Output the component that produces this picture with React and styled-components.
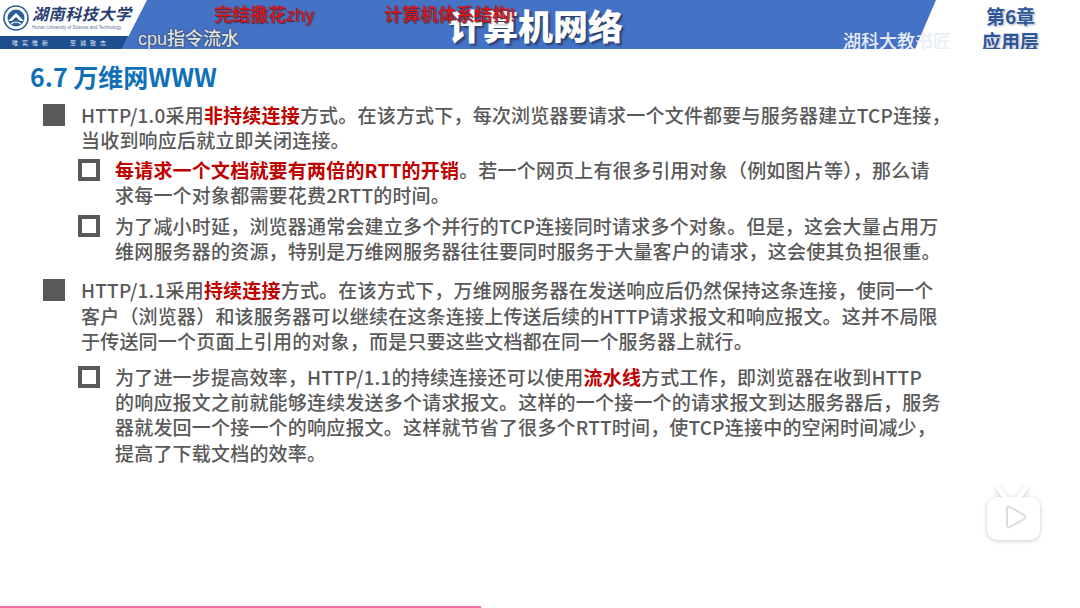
import React from 'react';
import styled, { createGlobalStyle } from 'styled-components';

const GlobalStyle = createGlobalStyle`
  html, body {
    margin: 0;
    padding: 0;
    background: #fff;
  }
  body {
    font-family: "Noto Sans CJK SC", "Noto Sans", sans-serif;
  }
`;

const Page = styled.div`
  position: relative;
  width: 1080px;
  height: 608px;
  overflow: hidden;
  background: #fff;
`;

const Header = styled.header`
  position: relative;
  display: flex;
  justify-content: space-between;
  height: 49px;
  background: #4472c4;
`;

const LogoPanel = styled.div`
  display: flex;
  flex-direction: column;
  width: 147px;
  background: #fff;
  clip-path: polygon(0 0, 100% 0, 122px 100%, 0 100%);
`;

const LogoTop = styled.div`
  display: flex;
  align-items: center;
  gap: 3px;
  height: 36px;
  padding-left: 3px;
`;

const SchoolName = styled.div`
  display: flex;
  flex-direction: column;
`;

const SchoolCn = styled.span`
  font-family: "Liberation Serif", "Noto Sans CJK SC", serif;
  font-size: 16px;
  font-style: italic;
  font-weight: 700;
  line-height: 20px;
  letter-spacing: 0.6px;
  color: #27406f;
  white-space: nowrap;
`;

const SchoolEn = styled.span`
  font-family: "Liberation Sans", sans-serif;
  font-size: 4.5px;
  line-height: 6px;
  color: #5a6f95;
  white-space: nowrap;
`;

const Motto = styled.div`
  display: flex;
  gap: 18px;
  height: 13px;
  padding-left: 12px;
  background: #1f4e8f;
  font-size: 6px;
  line-height: 13px;
  letter-spacing: 4px;
  color: #dfe7f3;
  white-space: nowrap;
`;

const ChapterPanel = styled.div`
  display: flex;
  flex-direction: column;
  align-items: center;
  width: 165px;
  padding-left: 26px;
  padding-top: 3px;
  box-sizing: border-box;
  background: #fff;
  clip-path: polygon(21px 0, 100% 0, 100% 100%, 0 100%);
`;

const ChapterLine = styled.span`
  font-size: 19px;
  font-weight: 700;
  line-height: 25px;
  color: #2f5597;
  text-shadow: 0 0 2px #fff, 1px 1px 2px #8e9bb5;
`;

const Title = styled.h1`
  position: absolute;
  left: 448px;
  top: 2px;
  margin: 0;
  font-size: 35px;
  font-weight: 900;
  line-height: 46px;
  color: #fff;
  text-shadow: 2px 2px 2px #2a3f6e;
  white-space: nowrap;
`;

const Danmaku = styled.span`
  position: absolute;
  left: ${p => p.$x}px;
  top: ${p => p.$y}px;
  font-family: "Liberation Sans", "Noto Sans CJK SC", sans-serif;
  font-size: ${p => p.$size}px;
  line-height: 22px;
  font-weight: 500;
  color: ${p => p.$color};
  text-shadow: ${p => p.$shadow};
  white-space: nowrap;
`;

const Main = styled.main`
  padding: 11px 0 0 30px;
`;

const SectionTitle = styled.h2`
  margin: 0 0 9px;
  font-size: 25px;
  font-weight: 700;
  line-height: 33px;
  color: #0f70b7;
`;

const List = styled.div`
  display: flex;
  flex-direction: column;
  padding-left: 13px;
`;

const Item = styled.div`
  display: flex;
  gap: ${p => (p.$sub ? 15 : 16)}px;
  margin-left: ${p => (p.$sub ? 35 : 0)}px;
  margin-top: ${p => p.$top || 0}px;
`;

const Bullet = styled.span`
  flex: none;
  box-sizing: border-box;
  width: 22px;
  height: 22px;
  margin-top: 2px;
  border: 4px solid #595959;
  background: ${p => (p.$filled ? '#595959' : '#fff')};
`;

const Text = styled.p`
  margin: 0;
  font-size: 19px;
  font-weight: 500;
  line-height: 25.4px;
  letter-spacing: 0.2px;
  color: #595959;
  white-space: nowrap;
`;

const Mark = styled.span`
  font-weight: 700;
  color: #c00000;
`;

const TvBadge = styled.svg`
  position: absolute;
  left: 984px;
  top: 486px;
  filter: drop-shadow(0 1px 2px rgba(0, 0, 0, 0.22));
`;

const Progress = styled.div`
  position: absolute;
  left: 0;
  bottom: 0;
  width: 481px;
  height: 2px;
  background: #fb7299;
`;

export default function App() {
  return (
    <Page>
      <GlobalStyle />
      <Header>
        <LogoPanel>
          <LogoTop>
            <svg width="26" height="26" viewBox="0 0 26 26">
              <circle cx="13" cy="13" r="12" fill="#fff" stroke="#2b5c9c" strokeWidth="1.6" />
              <circle cx="13" cy="13" r="8.5" fill="#2b5c9c" />
              <path d="M5 16 L13 8 L21 16 L17 16 L13 12 L9 16 Z" fill="#fff" />
              <path d="M8 19 Q13 15 18 19" fill="none" stroke="#fff" strokeWidth="1.2" />
            </svg>
            <SchoolName>
              <SchoolCn>湖南科技大学</SchoolCn>
              <SchoolEn>Hunan University of Science and Technology</SchoolEn>
            </SchoolName>
          </LogoTop>
          <Motto>
            <span>唯实惟新</span>
            <span>至诚致志</span>
          </Motto>
        </LogoPanel>
        <ChapterPanel>
          <ChapterLine>第6章</ChapterLine>
          <ChapterLine>应用层</ChapterLine>
        </ChapterPanel>
        <Title>计算机网络</Title>
        <Danmaku $x={214} $y={4} $size={18} $color="#d8141c" $shadow="1px 1px 1px #3a2a3a">完结撒花zhy</Danmaku>
        <Danmaku $x={384} $y={4} $size={18} $color="#d8141c" $shadow="1px 1px 1px #3a2a3a">计算机体系结构!</Danmaku>
        <Danmaku $x={138} $y={28} $size={18} $color="#e4e4e4" $shadow="0 0 2px #222">cpu指令流水</Danmaku>
        <Danmaku $x={843} $y={31} $size={18} $color="#e8edf7" $shadow="none">湖科大教书匠</Danmaku>
      </Header>
      <Main>
        <SectionTitle>6.7 万维网WWW</SectionTitle>
        <List>
          <Item>
            <Bullet $filled />
            <Text>
              HTTP/1.0采用<Mark>非持续连接</Mark>方式。在该方式下，每次浏览器要请求一个文件都要与服务器建立TCP连接，<br />
              当收到响应后就立即关闭连接。
            </Text>
          </Item>
          <Item $sub $top={4}>
            <Bullet />
            <Text>
              <Mark>每请求一个文档就要有两倍的RTT的开销</Mark>。若一个网页上有很多引用对象（例如图片等），那么请<br />
              求每一个对象都需要花费2RTT的时间。
            </Text>
          </Item>
          <Item $sub $top={5}>
            <Bullet />
            <Text>
              为了减小时延，浏览器通常会建立多个并行的TCP连接同时请求多个对象。但是，这会大量占用万<br />
              维网服务器的资源，特别是万维网服务器往往要同时服务于大量客户的请求，这会使其负担很重。
            </Text>
          </Item>
          <Item $top={14}>
            <Bullet $filled />
            <Text>
              HTTP/1.1采用<Mark>持续连接</Mark>方式。在该方式下，万维网服务器在发送响应后仍然保持这条连接，使同一个<br />
              客户（浏览器）和该服务器可以继续在这条连接上传送后续的HTTP请求报文和响应报文。这并不局限<br />
              于传送同一个页面上引用的对象，而是只要这些文档都在同一个服务器上就行。
            </Text>
          </Item>
          <Item $sub $top={10}>
            <Bullet />
            <Text>
              为了进一步提高效率，HTTP/1.1的持续连接还可以使用<Mark>流水线</Mark>方式工作，即浏览器在收到HTTP<br />
              的响应报文之前就能够连续发送多个请求报文。这样的一个接一个的请求报文到达服务器后，服务<br />
              器就发回一个接一个的响应报文。这样就节省了很多个RTT时间，使TCP连接中的空闲时间减少，<br />
              提高了下载文档的效率。
            </Text>
          </Item>
        </List>
      </Main>
      <TvBadge width="58" height="56" viewBox="0 0 58 56">
        <path d="M15 3 L23 14 M41 3 L33 14" stroke="#fff" strokeWidth="5" strokeLinecap="round" />
        <rect x="3" y="11" width="53" height="43" rx="10" fill="#fff" />
        <path d="M23 23 Q23 20 26 21 L40 29 Q42 31 40 33 L26 41 Q23 42 23 39 Z" fill="#fff" stroke="#dcdcdc" strokeWidth="2" />
      </TvBadge>
      <Progress />
    </Page>
  );
}
